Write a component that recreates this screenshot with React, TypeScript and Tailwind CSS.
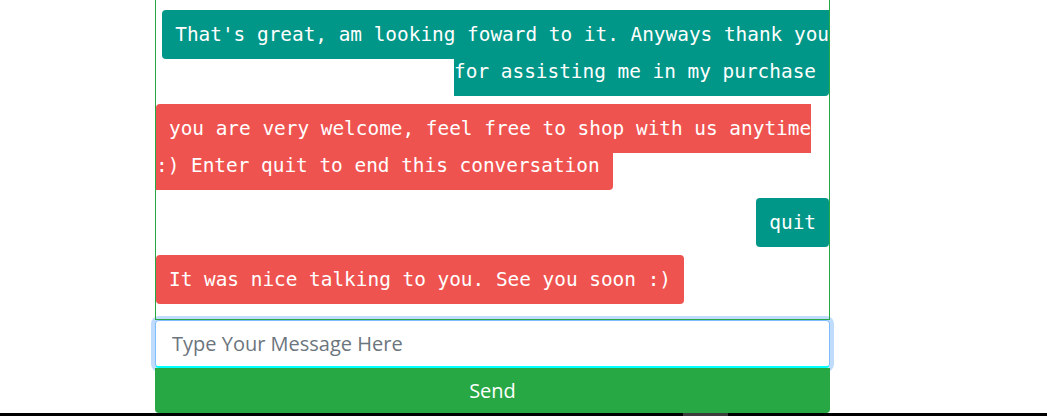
import React from 'react';

type Msg = { from: 'user' | 'bot'; text: string };

const messages: Msg[] = [
  { from: 'user', text: "That's great, am looking foward to it. Anyways thank you for assisting me in my purchase" },
  { from: 'bot', text: 'you are very welcome, feel free to shop with us anytime :) Enter quit to end this conversation' },
  { from: 'user', text: 'quit' },
  { from: 'bot', text: 'It was nice talking to you. See you soon :)' },
];

export default function App() {
  return (
    <div className="w-[1047px] h-[416px] bg-white overflow-hidden flex flex-col">
      {/* Chat log */}
      <div className="relative z-10 ml-[155px] w-[675px] h-[320px] border-x border-b border-[#28a745] overflow-hidden flex flex-col justify-end gap-[20px] pb-[21px] font-['DejaVu_Sans_Mono',monospace] text-[19.4px]">
        {messages.map((m, i) => (
          <div key={i} className={m.from === 'user' ? 'leading-[37px] text-right' : 'leading-[37px] text-left'}>
            <span
              className={
                m.from === 'user'
                  ? 'px-[13px] py-[13px] rounded-[4px] text-white bg-[#009688]'
                  : 'px-[13px] py-[13px] rounded-[4px] text-white bg-[#ef5350]'
              }
            >
              {m.text}
            </span>
          </div>
        ))}
      </div>

      {/* Input */}
      <input
        autoFocus
        placeholder="Type Your Message Here"
        className="block ml-[155px] w-[675px] h-[48px] shrink-0 px-4 border border-[#80bdff] border-b-2 border-b-[#00ffff] rounded-[4px] shadow-[0_0_0_4px_#c0dcfc] outline-none text-[20px] text-[#495057] placeholder:text-[#6c757d] font-['Open_Sans',sans-serif]"
      />
      <button className="block ml-[155px] w-[675px] h-[45px] shrink-0 bg-[#28a745] text-white text-[20px] rounded-b-[4px] font-['Open_Sans',sans-serif]">
        Send
      </button>

      {/* bottom strip */}
      <div className="h-[3px] shrink-0 bg-black flex">
        <div className="ml-[683px] w-[45px] bg-[#3c3c3c]" />
      </div>
    </div>
  );
}
